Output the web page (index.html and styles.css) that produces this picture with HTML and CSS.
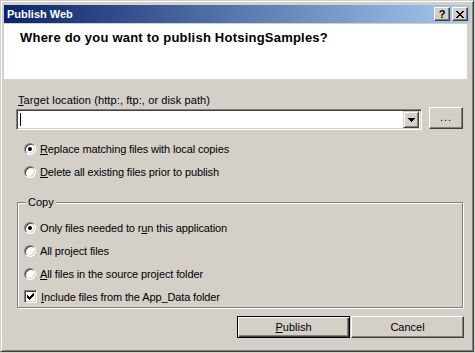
FILE: index.html
```html
<!DOCTYPE html>
<html>
<head>
<meta charset="utf-8">
<title>Publish Web</title>
<link rel="stylesheet" href="styles.css">
</head>
<body>
<div class="window">
  <div class="caption">
    <span class="caption-title">Publish Web</span>
    <div class="caption-buttons">
      <span class="cap-btn help">?</span>
      <span class="cap-btn close"><svg width="8" height="7" viewBox="0 0 8 7"><path d="M0 0h2v1h-2z M6 0h2v1h-2z M1 1h2v1h-2z M5 1h2v1h-2z M2 2h4v1h-4z M3 3h2v1h-2z M2 4h4v1h-4z M1 5h2v1h-2z M5 5h2v1h-2z M0 6h2v1h-2z M6 6h2v1h-2z" fill="#000"/></svg></span>
    </div>
  </div>
  <div class="header">
    <h1 class="header-title">Where do you want to publish HotsingSamples?</h1>
  </div>
  <div class="content">
    <div class="field-label"><u>T</u>arget location (http:, ftp:, or disk path)</div>
    <div class="location-row">
      <div class="combo">
        <span class="caret"></span>
        <span class="combo-btn"><svg width="7" height="4" viewBox="0 0 7 4"><path d="M0 0h7v1h-7z M1 1h5v1h-5z M2 2h3v1h-3z M3 3h1v1h-1z" fill="#000"/></svg></span>
      </div>
      <div class="btn browse">...</div>
    </div>
    <div class="options">
      <div class="option"><span class="radio checked"></span><span class="option-text"><u>R</u>eplace matching files with local copies</span></div>
      <div class="option"><span class="radio"></span><span class="option-text"><u>D</u>elete all existing files prior to publish</span></div>
    </div>
    <fieldset class="group">
      <legend class="group-label">Copy</legend>
      <div class="group-rows">
        <div class="option"><span class="radio checked"></span><span class="option-text">Only files needed to r<u>u</u>n this application</span></div>
        <div class="option"><span class="radio"></span><span class="option-text">All pro<u>j</u>ect files</span></div>
        <div class="option"><span class="radio"></span><span class="option-text"><u>A</u>ll files in the source project folder</span></div>
        <div class="option"><span class="checkbox"><svg width="7" height="7" viewBox="0 0 7 7"><path d="M6 0h1v1h-1z M5 1h2v1h-2z M0 2h1v1h-1z M4 2h3v1h-3z M0 3h2v1h-2z M3 3h3v1h-3z M0 4h5v1h-5z M1 5h3v1h-3z M2 6h1v1h-1z" fill="#000"/></svg></span><span class="option-text"><u>I</u>nclude files from the App_Data folder</span></div>
      </div>
    </fieldset>
    <div class="actions">
      <div class="btn default"><span><u>P</u>ublish</span></div>
      <div class="btn">Cancel</div>
    </div>
  </div>
</div>
</body>
</html>
```
FILE: styles.css
```css
html, body {
  margin: 0;
  padding: 0;
}
body {
  width: 475px;
  height: 353px;
  background: #D4D0C8;
  font-family: "Liberation Sans", Arial, sans-serif;
  font-size: 11px;
  color: #000;
  overflow: hidden;
}
.window {
  box-sizing: border-box;
  width: 474px;
  height: 352px;
  background: #D4D0C8;
  border-style: solid;
  border-width: 1px;
  border-color: #D4D0C8 #404040 #404040 #D4D0C8;
  box-shadow: inset 1px 1px 0 #fff, inset -1px -1px 0 #808080;
  padding: 4px 3px 4px 3px;
  display: flex;
  flex-direction: column;
}
.caption {
  height: 18px;
  background: linear-gradient(to right, #0A246A, #A6CAF0);
  display: flex;
  align-items: center;
  justify-content: space-between;
  padding: 0 2px 0 3px;
  flex: none;
}
.caption-title {
  color: #fff;
  font-weight: bold;
  font-size: 11px;
}
.caption-buttons {
  display: flex;
  gap: 2px;
}
.cap-btn {
  box-sizing: border-box;
  width: 16px;
  height: 14px;
  background: #D4D0C8;
  border: 1px solid;
  border-color: #fff #404040 #404040 #fff;
  box-shadow: inset -1px -1px 0 #808080;
  display: flex;
  align-items: center;
  justify-content: center;
  font-weight: bold;
  font-size: 11px;
  line-height: 11px;
}
.header {
  margin-top: 1px;
  margin-right: 3px;
  height: 55px;
  background: #fff;
  flex: none;
}
.header-title {
  margin: 0;
  padding: 6px 0 0 16px;
  font-size: 13px;
  font-weight: bold;
  line-height: 16px;
  letter-spacing: 0.22px;
}
.content {
  flex: 1;
  display: flex;
  flex-direction: column;
}
.field-label {
  margin-top: 15px;
  padding-left: 14px;
  line-height: 13px;
  letter-spacing: 0.1px;
}
.location-row {
  display: flex;
  align-items: flex-start;
  padding-left: 12px;
  gap: 7px;
}
.combo {
  box-sizing: border-box;
  width: 406px;
  height: 21px;
  margin-top: 2px;
  background: #fff;
  border: 1px solid;
  border-color: #808080 #fff #fff #808080;
  box-shadow: inset 1px 1px 0 #404040, inset -1px -1px 0 #D4D0C8;
  display: flex;
  align-items: center;
  justify-content: space-between;
  padding: 0 2px 0 3px;
}
.caret {
  width: 1px;
  height: 13px;
  background: #000;
}
.combo-btn {
  box-sizing: border-box;
  width: 16px;
  height: 17px;
  background: #D4D0C8;
  border: 1px solid;
  border-color: #D4D0C8 #404040 #404040 #D4D0C8;
  box-shadow: inset 1px 1px 0 #fff, inset -1px -1px 0 #808080;
  display: flex;
  align-items: center;
  justify-content: center;
}
.btn {
  box-sizing: border-box;
  width: 113px;
  height: 22px;
  background: #D4D0C8;
  border: 1px solid;
  border-color: #fff #404040 #404040 #fff;
  box-shadow: inset -1px -1px 0 #808080;
  display: flex;
  align-items: center;
  justify-content: center;
}
.btn.browse {
  width: 34px;
  height: 22px;
  padding-bottom: 2px;
  letter-spacing: 1px;
}
.btn.default {
  border-color: #000;
  box-shadow: inset 1px 1px 0 #fff, inset -1px -1px 0 #404040, inset -2px -2px 0 #808080;
}
.options {
  margin-top: 7px;
  padding-left: 20px;
}
.option {
  height: 23px;
  display: flex;
  align-items: center;
  gap: 4px;
}
.option-text {
  letter-spacing: -0.12px;
}
.radio {
  box-sizing: border-box;
  width: 12px;
  height: 12px;
  border-radius: 50%;
  background: #fff;
  border: 1px solid;
  border-color: #808080 #fff #fff #808080;
  box-shadow: inset 1px 1px 0 #404040, inset -1px -1px 0 #D4D0C8;
  display: flex;
  align-items: center;
  justify-content: center;
  flex: none;
}
.radio.checked::after {
  content: "";
  width: 4px;
  height: 4px;
  border-radius: 50%;
  background: #000;
}
.checkbox {
  box-sizing: border-box;
  width: 13px;
  height: 13px;
  background: #fff;
  border: 1px solid;
  border-color: #808080 #fff #fff #808080;
  box-shadow: inset 1px 1px 0 #404040, inset -1px -1px 0 #D4D0C8;
  display: flex;
  align-items: center;
  justify-content: center;
  flex: none;
}
.group {
  box-sizing: border-box;
  margin: 13px 0 0 13px;
  width: 446px;
  height: 112px;
  padding: 0;
  border: 1px solid #808080;
  box-shadow: 1px 1px 0 #fff, inset 1px 1px 0 #fff;
  min-inline-size: 0;
}
.group-label {
  margin-left: 8px;
  padding: 0 2px;
  line-height: 13px;
  background: #D4D0C8;
}
.group-rows {
  margin-top: 7px;
  padding-left: 6px;
}
.actions {
  margin-top: 8px;
  display: flex;
  justify-content: flex-end;
  gap: 1px;
  padding-right: 6px;
}
```
